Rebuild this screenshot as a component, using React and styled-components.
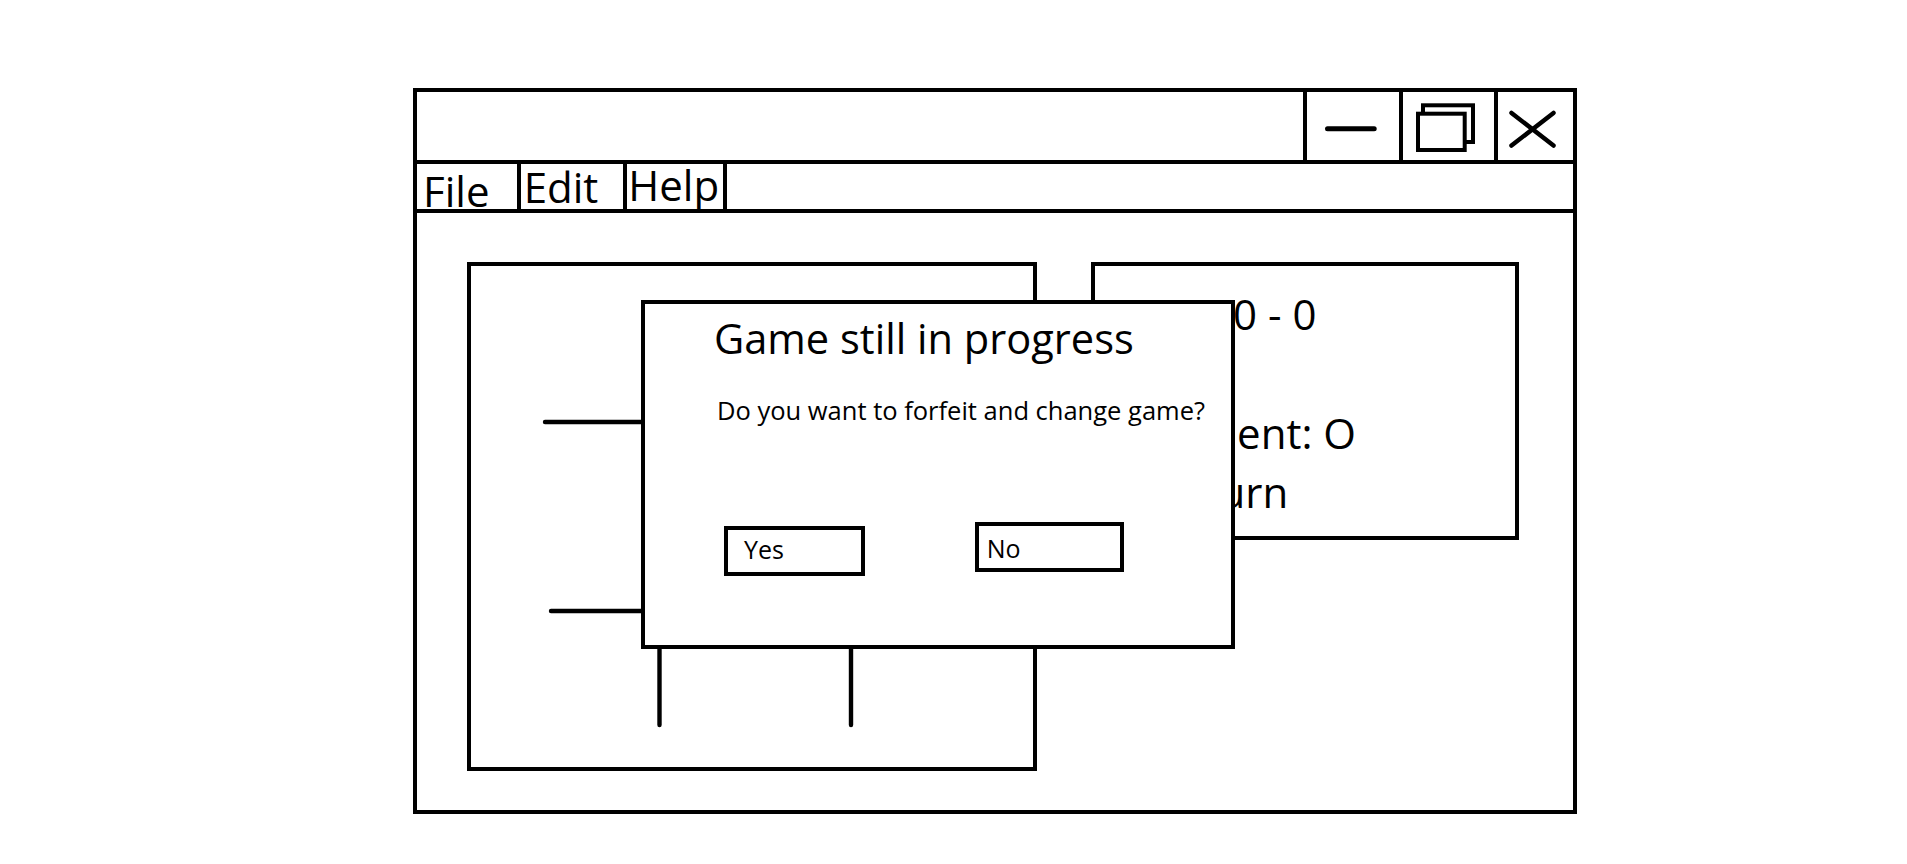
import React from "react";
import styled, { createGlobalStyle } from "styled-components";

const GlobalStyle = createGlobalStyle`
  html, body { margin: 0; padding: 0; background: #fff; }
  body { font-family: "Open Sans", "Noto Sans", sans-serif; color: #000; }
  * { box-sizing: border-box; }
`;

const Page = styled.div`
  padding: 88px 0 0 413px;
  min-height: 864px;
`;

const Window = styled.div`
  width: 1164px;
  height: 726px;
  border: 4px solid #000;
  display: flex;
  flex-direction: column;
  background: #fff;
`;

const TitleBar = styled.div`
  flex: none;
  height: 72px;
  border-bottom: 4px solid #000;
  display: flex;
  justify-content: flex-end;
`;

const WinButton = styled.div`
  width: ${(p) => p.$w}px;
  height: 100%;
  border-left: 4px solid #000;
  svg { display: block; }
`;

const MenuBar = styled.div`
  flex: none;
  height: 49px;
  border-bottom: 4px solid #000;
  display: flex;
`;

const MenuItem = styled.div`
  width: ${(p) => p.$w}px;
  height: 45px;
  border-right: 4px solid #000;
  padding: ${(p) => p.$top}px 0 0 ${(p) => p.$left}px;
  font-size: 42px;
  line-height: 42px;
  white-space: nowrap;
`;

const Content = styled.div`
  position: relative;
  flex: 1;
  display: flex;
  align-items: flex-start;
  gap: 54px;
  padding: 49px 0 0 50px;
`;

const Board = styled.div`
  flex: none;
  width: 570px;
  height: 509px;
  border: 4px solid #000;
  svg { display: block; }
`;

const ScorePanel = styled.div`
  flex: none;
  width: 428px;
  height: 278px;
  border: 4px solid #000;
  padding: 17.5px 0 0 7px;
  font-size: 42px;
  line-height: 59.5px;
  white-space: nowrap;
  overflow: hidden;
`;

const Dialog = styled.div`
  position: absolute;
  left: 224px;
  top: 87px;
  width: 594px;
  height: 349px;
  border: 4px solid #000;
  background: #fff;
  display: flex;
  flex-direction: column;
  align-items: flex-start;
`;

const DialogTitle = styled.div`
  margin: 9px 0 0 69px;
  font-size: 41.6px;
  line-height: 50.4px;
  white-space: nowrap;
`;

const DialogText = styled.div`
  margin: 32px 0 0 72px;
  font-size: 25.5px;
  line-height: 31.2px;
  white-space: nowrap;
`;

const ButtonRow = styled.div`
  margin-top: 95.5px;
  padding-left: 78.5px;
  display: flex;
  align-items: flex-start;
  gap: 110px;
`;

const DialogButton = styled.div`
  width: ${(p) => p.$w}px;
  height: 50px;
  margin-top: ${(p) => p.$dy}px;
  border: 4px solid #000;
  padding: ${(p) => p.$pt}px 0 0 ${(p) => p.$pl}px;
  font-size: 25px;
  line-height: 25px;
  white-space: nowrap;
`;

const stroke = { stroke: "#000", strokeLinecap: "round", fill: "none" };

export default function App() {
  return (
    <>
      <GlobalStyle />
      <Page>
        <Window>
          <TitleBar>
            <WinButton $w={96}>
              <svg width="92" height="68">
                <line x1="20.5" y1="36.8" x2="67.2" y2="36.8" strokeWidth="5" {...stroke} />
              </svg>
            </WinButton>
            <WinButton $w={95}>
              <svg width="91" height="68">
                <rect x="20" y="13.3" width="50" height="36.7" strokeWidth="4" stroke="#000" fill="#fff" />
                <rect x="15" y="21.7" width="46.7" height="36.3" strokeWidth="4" stroke="#000" fill="#fff" />
              </svg>
            </WinButton>
            <WinButton $w={79}>
              <svg width="75" height="68">
                <line x1="13.5" y1="21" x2="55.5" y2="53.5" strokeWidth="4.5" {...stroke} />
                <line x1="13.5" y1="53.5" x2="55.5" y2="21" strokeWidth="4.5" {...stroke} />
              </svg>
            </WinButton>
          </TitleBar>
          <MenuBar>
            <MenuItem $w={104} $left={6} $top={5.8}>File</MenuItem>
            <MenuItem $w={106} $left={2.7} $top={2.1}>Edit</MenuItem>
            <MenuItem $w={100} $left={1.3} $top={0}>Help</MenuItem>
          </MenuBar>
          <Content>
            <Board>
              <svg width="562" height="501">
                <line x1="74" y1="156" x2="490" y2="156" strokeWidth="4.4" {...stroke} />
                <line x1="80" y1="345" x2="490" y2="345" strokeWidth="4.4" {...stroke} />
                <line x1="188.5" y1="60" x2="188.5" y2="459" strokeWidth="4.4" {...stroke} />
                <line x1="380" y1="60" x2="380" y2="459" strokeWidth="4.4" {...stroke} />
              </svg>
            </Board>
            <ScorePanel>
              <div>Score: 0 - 0</div>
              <div>You: X</div>
              <div>Opponent: O</div>
              <div>Your turn</div>
            </ScorePanel>
            <Dialog>
              <DialogTitle>Game still in progress</DialogTitle>
              <DialogText>Do you want to forfeit and change game?</DialogText>
              <ButtonRow>
                <DialogButton $w={141} $dy={3.7} $pl={16.5} $pt={7.5}>Yes</DialogButton>
                <DialogButton $w={149} $dy={0} $pl={8.3} $pt={9.8}>No</DialogButton>
              </ButtonRow>
            </Dialog>
          </Content>
        </Window>
      </Page>
    </>
  );
}
